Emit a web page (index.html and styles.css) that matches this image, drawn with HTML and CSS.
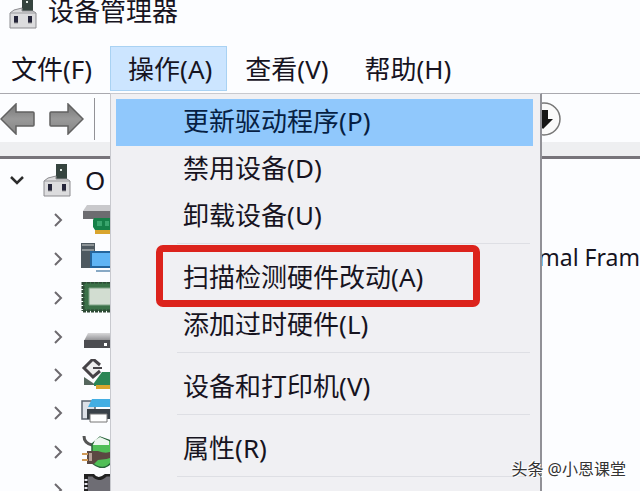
FILE: index.html
```html
<!DOCTYPE html>
<html lang="zh-CN">
<head>
<meta charset="utf-8">
<title>设备管理器</title>
<link rel="stylesheet" href="styles.css">
</head>
<body>
<svg class="defs" aria-hidden="true">
  <defs>
    <linearGradient id="steel" x1="0" y1="0" x2="0" y2="1"><stop offset="0" stop-color="#777"/><stop offset=".5" stop-color="#999"/><stop offset="1" stop-color="#858585"/></linearGradient>
    <linearGradient id="lid" x1="0" y1="0" x2="0" y2="1"><stop offset="0" stop-color="#d8d8da"/><stop offset="1" stop-color="#8a8a8d"/></linearGradient>
    <symbol id="device" viewBox="0 0 28 33">
      <path d="M13 0h11v16H13z" fill="#35443f"/><path d="M17 5h2v2h-2z" fill="#dfe8e2"/>
      <path d="M5 14l8-2v3h11l3 2v15H1V17z" fill="#dcdcde" stroke="#8c8c90"/>
      <path d="M1 17h26" stroke="#9a9a9d"/><path d="M5 20h4v7H5zM19 20h4v7h-4z" fill="#25253a"/>
      <path d="M5 27h4M19 27h4" stroke="#999"/>
    </symbol>
    <symbol id="chevron" viewBox="0 0 10 14"><path d="M2 1l6 6-6 6" fill="none" stroke="#6d6a6f" stroke-width="2"/></symbol>
  </defs>
</svg>
<div class="window">
  <header class="title">
    <svg class="device"><use href="#device"/></svg>
    <h1>设备管理器</h1>
  </header>
  <nav class="menubar">
    <button type="button">文件(F)</button>
    <div class="open">
      <button type="button" class="active">操作(A)</button>
      <div class="popup">
        <button type="button" class="selected">更新驱动程序(P)</button>
        <button type="button">禁用设备(D)</button>
        <button type="button">卸载设备(U)</button>
        <hr>
        <button type="button" class="marked">扫描检测硬件改动(A)</button>
        <button type="button">添加过时硬件(L)</button>
        <hr>
        <button type="button">设备和打印机(V)</button>
        <hr>
        <button type="button">属性(R)</button>
        <hr>
      </div>
    </div>
    <button type="button">查看(V)</button>
    <button type="button">帮助(H)</button>
  </nav>
  <div class="toolbar">
    <button type="button" aria-label="后退"><svg width="35" height="32" viewBox="0 0 35 32"><path d="M1 16L16 1v8h17q1 0 1 1v12q0 1-1 1H16v8z" fill="url(#steel)" stroke="#626262" stroke-width="1.5"/></svg></button>
    <button type="button" aria-label="前进"><svg width="35" height="32" viewBox="0 0 35 32"><path d="M34 16L19 1v8H2q-1 0-1 1v12q0 1 1 1h17v8z" fill="url(#steel)" stroke="#626262" stroke-width="1.5"/></svg></button>
    <span class="divider"></span>
    <button type="button" class="down" aria-label="禁用"><svg width="34" height="34" viewBox="0 0 34 34"><circle cx="17" cy="17" r="16" fill="#fafafa" stroke="#777" stroke-width="1.5"/><path d="M11 8h10v9h5l-10 10-9-10h4z" fill="#151515"/></svg></button>
  </div>
  <main class="tree">
    <div class="root">
      <svg width="16" height="10" viewBox="0 0 16 10"><path d="M2 2l6 6 6-6" fill="none" stroke="#2c2c2c" stroke-width="2.5"/></svg>
      <svg class="device"><use href="#device"/></svg>
      <span>O</span>
    </div>
    <ul>
      <li><svg class="chevron"><use href="#chevron"/></svg>
        <svg class="icon" viewBox="0 0 32 32"><path d="M6 1h26v6H2z" fill="#c9c9cc"/><path d="M2 7h30v8H2z" fill="#6c6c70"/><path d="M13 14h19v12H14l-2-3v-7z" fill="#158048"/><path d="M16 17h5v5h-5zM24 17h4v5h-4z" fill="#3aa56d"/><path d="M14 26h18v4H14z" fill="#d9a52e"/></svg></li>
      <li><svg class="chevron"><use href="#chevron"/></svg>
        <svg class="icon" viewBox="0 0 32 32"><path d="M0 0h14v25H0z" fill="#4e5960"/><path d="M1 2h12M1 7h12" stroke="#8c9396" stroke-width="2"/><path d="M9 8h23v17H9z" fill="#25659d"/><path d="M11 10h21v13H11z" fill="#5fb4f5"/><path d="M15 28h17" stroke="#88a9c5" stroke-width="2"/></svg>
        <span class="name">mal Fram</span></li>
      <li><svg class="chevron"><use href="#chevron"/></svg>
        <svg class="icon" viewBox="0 0 32 32"><path d="M2 0h30v29H2z" fill="#3b7148"/><path d="M2 0v29M2 29h30M2 0h30" fill="none" stroke="#2d4935" stroke-width="3" stroke-dasharray="3 1"/><path d="M8 6h24v17H8z" fill="#d2ddd1" stroke="#80a487"/></svg></li>
      <li><svg class="chevron"><use href="#chevron"/></svg>
        <svg class="icon" viewBox="0 0 32 32"><path d="M7 12h25v8H3z" fill="url(#lid)"/><path d="M3 19h29v8H3z" fill="#4c4d51"/><path d="M23 22h3v3h-3z" fill="#fff"/></svg></li>
      <li><svg class="chevron"><use href="#chevron"/></svg>
        <svg class="icon" viewBox="0 0 32 32"><path d="M3 18l12 8H3z" fill="#55665d"/><path d="M13 24l8-11h11v14H13z" fill="#2b8656"/><path d="M15 26h17v4H15z" fill="#d9a52e"/><path d="M19 6l-7-6-9 9 9 9 7-6" fill="#eee" stroke="#464347" stroke-width="3"/><path d="M12 9h9" stroke="#464347" stroke-width="2"/></svg></li>
      <li><svg class="chevron"><use href="#chevron"/></svg>
        <svg class="icon" viewBox="0 0 32 32"><path d="M1 4h13v18H1z" fill="#dce0e7" stroke="#59616e" stroke-width="1.5"/><path d="M11 2h21v8H7z" fill="#43aee3"/><path d="M6 12h26v10H6z" fill="#394148"/><path d="M9 17h17v8H9z" fill="#fff" stroke="#777"/></svg></li>
      <li><svg class="chevron"><use href="#chevron"/></svg>
        <svg class="icon" viewBox="0 0 32 32"><path d="M3 0q0 7 8 9" fill="none" stroke="#555" stroke-width="3"/><path d="M11 8l8-7 11 4v22q-8 9-19 0z" fill="#50bf57" stroke="#28643a" stroke-width="1.5"/><path d="M14 4l5-3 9 4v4H12z" fill="#edf7ef"/><path d="M6 15h11q10 4 15-1v7q-7 3-15 3l-4 4H6z" fill="#5b4842"/><path d="M1 18h6M1 24h6" stroke="#cf9958" stroke-width="2"/><path d="M8 17h3v8H8z" fill="#b7a199"/></svg></li>
      <li><svg class="chevron"><use href="#chevron"/></svg>
        <svg class="icon" viewBox="0 0 32 32"><path d="M4 0h8q5 7 13 0h7v32H4z" fill="#6e6d74"/><path d="M4 1h8q5 7 13 0h7" fill="none" stroke="#222" stroke-width="3"/><path d="M5 0v32" stroke="#222" stroke-width="4"/><path d="M5 5v27" stroke="#e5e5ef" stroke-width="3" stroke-dasharray="2 2"/></svg></li>
    </ul>
  </main>
  <div class="watermark">头条 @小恩课堂</div>
</div>
</body>
</html>
```
FILE: styles.css
```css
* { box-sizing: border-box; }

body {
  margin: 0;
  background: #fcfdff;
  color: #17141f;
  font: 26px/36px "Noto Sans", "Noto Sans CJK SC", sans-serif;
}

button {
  margin: 0;
  padding: 0;
  border: 0;
  background: none;
  color: inherit;
  font: inherit;
}

svg { display: block; flex: none; }

.defs { position: absolute; width: 0; height: 0; }

.window {
  display: flex;
  flex-direction: column;
  position: relative;
  height: 100vh;
  overflow: hidden;
}

.title {
  display: flex;
  align-items: flex-end;
  gap: 11px;
  flex: none;
  height: 29px;
  padding-left: 9px;
}

.title h1 { margin: 0; font-size: 26px; font-weight: 400; }

.device { width: 28px; height: 33px; }

.menubar {
  display: flex;
  flex: none;
  height: 65px;
  padding: 17px 0 2px;
  border-bottom: 1px solid #a9a9af;
}

.menubar > button { padding: 0 18px; }

.menubar > button:first-child { padding: 0 18px 0 11px; }

.open { position: relative; }

.active {
  height: 100%;
  padding: 0 14px 0 17px;
  border: 1px solid #a9d2f3;
  background: #cce5ff;
}

.popup {
  position: absolute;
  z-index: 1;
  top: 100%;
  left: 0;
  width: 432px;
  height: 100vh;
  margin-top: 2px;
  padding: 5px 7px 5px 5px;
  border: 1px solid #c8c9ce;
  border-right: 2px solid #919197;
  background: #f0f0f3;
}

.popup button {
  display: block;
  position: relative;
  width: 100%;
  height: 47px;
  padding: 0 0 3px 67px;
  text-align: left;
  white-space: nowrap;
}

.popup .selected { background: #90c8fc; color: #071f43; }

.popup hr {
  height: 1px;
  margin: 3px 3px 11px 61px;
  border: 0;
  background: #dedfe4;
}

.marked::after {
  content: "";
  position: absolute;
  inset: -10px 53px -5px 40px;
  border: 7px solid #dc231c;
  border-radius: 7px;
}

.toolbar {
  display: flex;
  align-items: center;
  flex: none;
  gap: 14px;
  height: 65px;
  padding-bottom: 13px;
  border-bottom: 3px solid #77747a;
  background: linear-gradient(#fcfdff 48px, #eeeff1 48px);
}

.divider { width: 1px; height: 42px; margin-left: -4px; background: #929297; }

.down { margin-left: 418px; }

.tree {
  display: flex;
  flex: 1;
  flex-direction: column;
  min-height: 0;
}

.root {
  display: flex;
  align-items: center;
  flex: none;
  gap: 18px;
  height: 42px;
  padding-left: 9px;
}

.root span { margin-left: -4px; }

.tree ul {
  display: flex;
  flex: 1;
  flex-direction: column;
  margin: 0 0 -18px;
  padding: 0;
  list-style: none;
}

.tree li {
  display: flex;
  align-items: center;
  flex: 1;
  gap: 18px;
  padding-left: 53px;
}

.chevron { width: 10px; height: 14px; }

.icon { width: 32px; height: 32px; }

.name { margin-left: auto; padding-bottom: 4px; font-size: 23px; }

.watermark {
  position: absolute;
  z-index: 2;
  right: 14px;
  bottom: 10px;
  color: #333;
  font-size: 16px;
  line-height: 24px;
  text-shadow: -1px -1px #fff, 1px 1px #fff;
}
```
